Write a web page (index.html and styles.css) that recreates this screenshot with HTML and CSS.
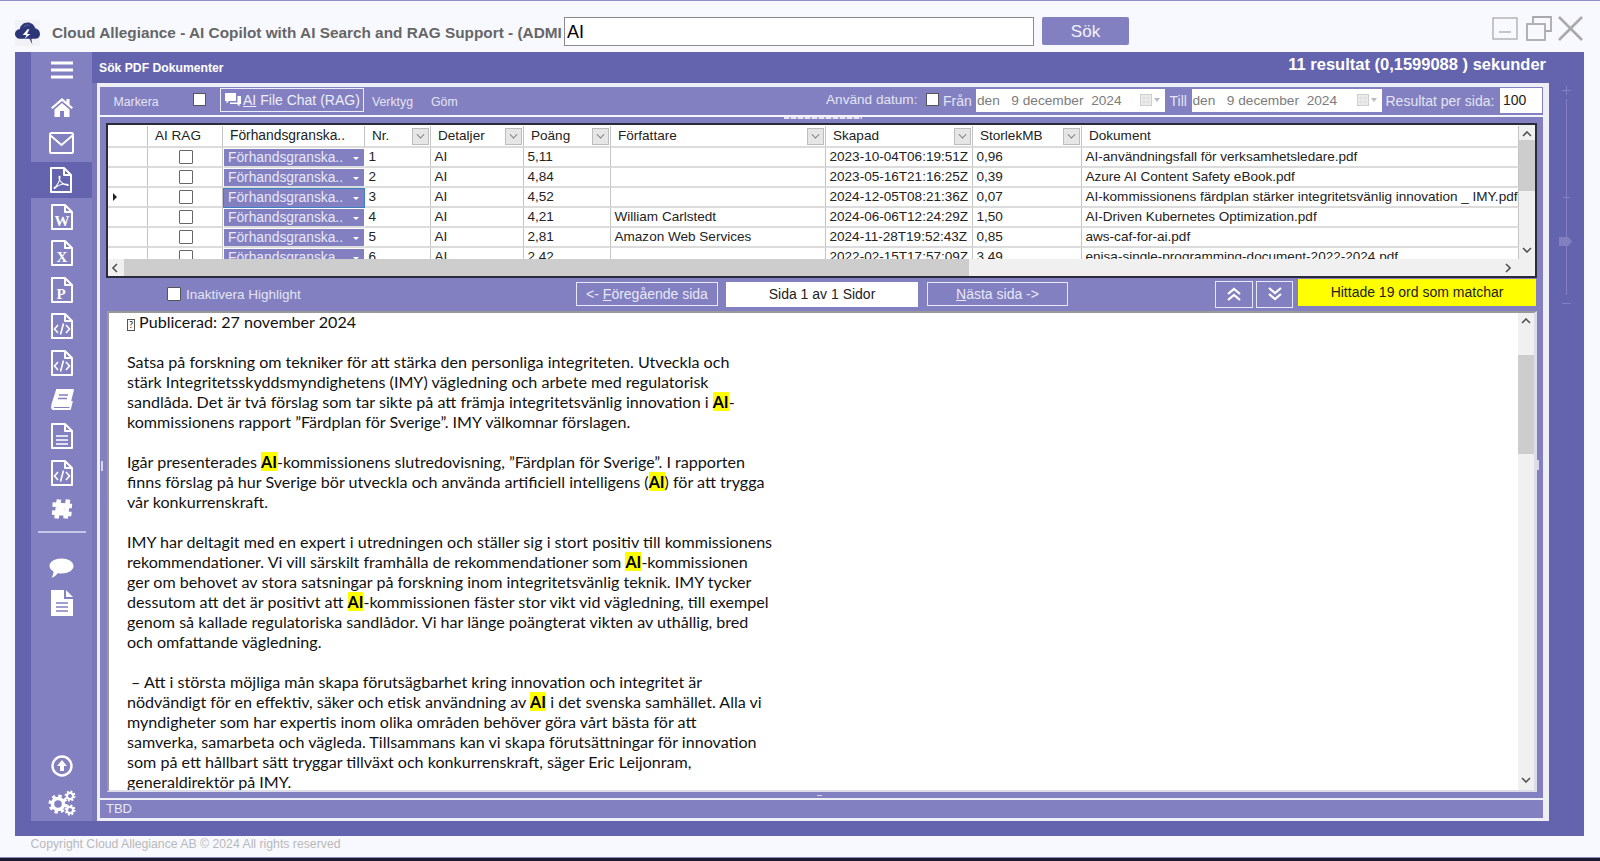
FILE: index.html
```html
<!DOCTYPE html>
<html lang="sv">
<head>
<meta charset="utf-8">
<title>Cloud Allegiance</title>
<link rel="stylesheet" href="styles.css">
</head>
<body>
<svg class="defs" width="0" height="0" aria-hidden="true">
  <symbol id="file" viewBox="0 0 22 26"><path d="M1 1H14L21 8V25H1Z M14 1V8H21" fill="none" stroke="#fff" stroke-width="2" stroke-linejoin="round"/></symbol>
  <symbol id="code" viewBox="0 0 22 26"><path d="M1 1H14L21 8V25H1Z M14 1V8H21" fill="none" stroke="#fff" stroke-width="2" stroke-linejoin="round"/><path d="M7 12L3.5 16L7 20M15 12L18.5 16L15 20M12.5 10.5L9.5 21.5" fill="none" stroke="#fff" stroke-width="1.6"/></symbol>
</svg>
<div class="app">
  <header class="topbar">
    <svg class="logo" viewBox="0 0 26 26"><path d="M6 19C2 19 0 16.500 0 14C0 11 2.500 9 5 9C5.500 5 9 2 13 2C17 2 20 4.500 21 8C24 8.500 26 11 26 14C26 17 24 19 21 19Z" fill="#2c3578"/><path d="M13 9L8 15H12L10 19L16 14H12.500L15 9Z" fill="#fff"/><path d="M14 17L18 25L17 19L19 18Z" fill="#3a3a80"/><path d="M9 7a5 5 0 0 1 6-2" fill="none" stroke="#5a64b0" stroke-width="1"/></svg>
    <h1 class="apptitle">Cloud Allegiance - AI Copilot with AI Search and RAG Support - (ADMI</h1>
    <input class="search" type="text" value="AI">
    <button class="searchbtn">Sök</button>
    <div class="winctl">
      <svg class="win w-min" viewBox="0 0 26 23"><rect x="1" y="1" width="24" height="21" fill="none" stroke="#b5b5b5" stroke-width="1.500"/><path d="M7 15H19" stroke="#b5b5b5" stroke-width="1.500"/></svg>
      <svg class="win w-max" viewBox="0 0 26 25"><path d="M7 7V1H25V15H19" fill="none" stroke="#aaa" stroke-width="1.800"/><rect x="1" y="8" width="18" height="16" fill="none" stroke="#aaa" stroke-width="1.800"/></svg>
      <svg class="win w-close" viewBox="0 0 25 25"><path d="M1 1L24 24M24 1L1 24" stroke="#aaa" stroke-width="2.600"/></svg>
    </div>
  </header>

  <main class="shell">
    <nav class="sidebar">
      <a class="navitem"><svg class="ic-menu" viewBox="0 0 22 18"><path d="M0 2H22M0 9H22M0 16H22" stroke="#fff" stroke-width="3"/></svg></a>
      <a class="navitem"><svg class="ic-home" viewBox="0 0 24 20"><path d="M12 1L1 10.500L2.500 12L12 4L21.500 12L23 10.500L19.500 7.500V2H16.500V5Z" fill="#fff"/><path d="M4.500 12.500L12 6L19.500 12.500V20H14V14H10V20H4.500Z" fill="#fff"/></svg></a>
      <a class="navitem"><svg class="ic-mail" viewBox="0 0 25 22"><rect x="1" y="1" width="23" height="20" rx="1.500" fill="none" stroke="#fff" stroke-width="2"/><path d="M1.500 3.500L12.500 13L23.500 3.500" fill="none" stroke="#fff" stroke-width="2"/></svg></a>
      <a class="navitem active"><svg class="ic-file" viewBox="0 0 22 26"><use href="#file"/><path d="M4 21C7 19 10 14 10 10C10 9 9 9 9 10.500C9 14 13 18 18 18.500C19 18 17.500 17 15 17C11 17 7 19 4.500 21.500Z" fill="none" stroke="#fff" stroke-width="1.100"/></svg></a>
      <a class="navitem"><svg class="ic-file" viewBox="0 0 22 26"><use href="#file"/><text class="fl" x="11" y="22" text-anchor="middle">W</text></svg></a>
      <a class="navitem"><svg class="ic-file" viewBox="0 0 22 26"><use href="#file"/><text class="fl" x="11" y="22" text-anchor="middle">X</text></svg></a>
      <a class="navitem"><svg class="ic-file" viewBox="0 0 22 26"><use href="#file"/><text class="fl" x="10" y="22" text-anchor="middle">P</text></svg></a>
      <a class="navitem"><svg class="ic-file" viewBox="0 0 22 26"><use href="#code"/></svg></a>
      <a class="navitem"><svg class="ic-file" viewBox="0 0 22 26"><use href="#code"/></svg></a>
      <a class="navitem"><svg class="ic-book" viewBox="0 0 24 22"><path d="M6 1H23L19 17H4C2 17 1.500 20 4 20H20L22 12" fill="none" stroke="#fff" stroke-width="1.800" stroke-linejoin="round"/><path d="M6 1L1.500 15C1 18 1 20 3 21H4L4 17L6 17L19 17L23 1Z" fill="#fff"/><path d="M9 6H18M8 9.500H17" stroke="#8280c0" stroke-width="1.500"/></svg></a>
      <a class="navitem"><svg class="ic-file" viewBox="0 0 22 26"><use href="#file"/><path d="M5 13H17M5 17H17M5 21H17" stroke="#fff" stroke-width="1.700"/></svg></a>
      <a class="navitem"><svg class="ic-file" viewBox="0 0 22 26"><use href="#code"/></svg></a>
      <a class="navitem"><svg class="ic-puzzle" viewBox="0 0 24 24"><path d="M9 2.500L6.500 21.500M18 2.500L15.500 21.500M2.500 7.500L22 9M2 15.500L21.500 17" fill="none" stroke="#fff" stroke-width="4.600"/><path d="M10 10H15L14 15.500H9Z" fill="#fff"/></svg></a>
      <hr class="navsep">
      <a class="navitem short"><svg class="ic-chat" viewBox="0 0 25 21"><path d="M12.500 1C19 1 24.500 4 24.500 8.500C24.500 13 19 16 12.500 16C11 16 10 16 9 15.500C7 18 4.500 20 2.500 20C4 18 4.500 16 4.500 14C2 12.500 0.500 10.500 0.500 8.500C0.500 4 6 1 12.500 1Z" fill="#fff"/></svg></a>
      <a class="navitem short"><svg class="ic-file" viewBox="0 0 22 26"><path d="M0 0H13V9H22V26H0Z M15 0L22 7H15Z" fill="#fff"/><path d="M5 13H17M5 17H17M5 21H17" stroke="#8280c0" stroke-width="1.700"/></svg></a>
      <a class="navitem bottomfirst"><svg class="ic-up" viewBox="0 0 22 22"><circle cx="11" cy="11" r="9.500" fill="none" stroke="#fff" stroke-width="2.400"/><path d="M11 5L16 11H13V16H9V11H6Z" fill="#fff"/></svg></a>
      <a class="navitem"><svg class="ic-gears" viewBox="0 0 28 26"><circle cx="10" cy="14" r="5.500" fill="none" stroke="#fff" stroke-width="3.500"/><circle cx="10" cy="14" r="8" fill="none" stroke="#fff" stroke-width="3" stroke-dasharray="3.300 3"/><circle cx="22" cy="6" r="3" fill="none" stroke="#fff" stroke-width="2"/><circle cx="22" cy="6" r="4.500" fill="none" stroke="#fff" stroke-width="2" stroke-dasharray="2 1.500"/><circle cx="22" cy="20" r="3" fill="none" stroke="#fff" stroke-width="2"/><circle cx="22" cy="20" r="4.500" fill="none" stroke="#fff" stroke-width="2" stroke-dasharray="2 1.500"/></svg></a>
    </nav>

    <section class="content">
      <div class="headband">
        <span class="pagetitle">Sök PDF Dokumenter</span>
        <span class="resultinfo">11 resultat (0,1599088 ) sekunder</span>
      </div>
      <div class="panel">
        <div class="purple">
          <i class="grip grip-left"></i>
          <i class="grip grip-right"></i>
          <i class="grip grip-top"></i>
          <i class="grip grip-bottom"></i>
          <div class="toolbar">
            <span class="tool t-markera">Markera</span>
            <span class="cb t-cb"></span>
            <button class="chatbtn"><svg class="chatic" viewBox="0 0 16 14"><path d="M0 0H11V8H4L1.500 10.500V8H0Z" fill="#fff"/><path d="M12.500 3H16V11H14.500V13.500L12 11H5V9.500H12.500Z" fill="#fff"/></svg><u>AI</u> File Chat (RAG)</button>
            <span class="tool t-verktyg">Verktyg</span>
            <span class="tool t-gom">Göm</span>
            <span class="tool t-datum">Använd datum:</span>
            <span class="cb t-cb2"></span>
            <span class="tool t-fran">Från</span>
            <div class="date t-d1"><span>den&nbsp;&nbsp; 9 december&nbsp; 2024</span><svg class="cal" viewBox="0 0 20 12"><rect x="0.500" y="0.500" width="11" height="11" fill="#eee" stroke="#ccc"/><path d="M0 4H12M0 8H12M4 0V12M8 0V12" stroke="#ddd"/><path d="M14 4H20L17 8Z" fill="#bbb"/></svg></div>
            <span class="tool t-till">Till</span>
            <div class="date t-d2"><span>den&nbsp;&nbsp; 9 december&nbsp; 2024</span><svg class="cal" viewBox="0 0 20 12"><rect x="0.500" y="0.500" width="11" height="11" fill="#eee" stroke="#ccc"/><path d="M0 4H12M0 8H12M4 0V12M8 0V12" stroke="#ddd"/><path d="M14 4H20L17 8Z" fill="#bbb"/></svg></div>
            <span class="tool t-res">Resultat per sida:</span>
            <input class="perpage" type="text" value="100">
          </div>

          <div class="gridbox">
            <div class="gridmain">
              <div class="table">
                <div class="cell hd"></div>
                <div class="cell hd"><span>AI RAG</span></div>
                <div class="cell hd hd-prev"><span>Förhandsgranska..</span></div>
                <div class="cell hd"><span>Nr.</span><i class="filter"></i></div>
                <div class="cell hd"><span>Detaljer</span><i class="filter"></i></div>
                <div class="cell hd"><span>Poäng</span><i class="filter"></i></div>
                <div class="cell hd"><span>Författare</span><i class="filter"></i></div>
                <div class="cell hd"><span>Skapad</span><i class="filter"></i></div>
                <div class="cell hd"><span>StorlekMB</span><i class="filter"></i></div>
                <div class="cell hd"><span>Dokument</span></div>

                <div class="cell"></div><div class="cell ctr"><span class="cb gridcb"></span></div><div class="cell drop"><span>Förhandsgranska..</span></div><div class="cell">1</div><div class="cell">AI</div><div class="cell">5,11</div><div class="cell"></div><div class="cell">2023-10-04T06:19:51Z</div><div class="cell">0,96</div><div class="cell">AI-användningsfall för verksamhetsledare.pdf</div>
                <div class="cell"></div><div class="cell ctr"><span class="cb gridcb"></span></div><div class="cell drop"><span>Förhandsgranska..</span></div><div class="cell">2</div><div class="cell">AI</div><div class="cell">4,84</div><div class="cell"></div><div class="cell">2023-05-16T21:16:25Z</div><div class="cell">0,39</div><div class="cell">Azure AI Content Safety eBook.pdf</div>
                <div class="cell cur"><i class="rowarrow"></i></div><div class="cell ctr"><span class="cb gridcb"></span></div><div class="cell drop sel"><span>Förhandsgranska..</span></div><div class="cell">3</div><div class="cell">AI</div><div class="cell">4,52</div><div class="cell"></div><div class="cell">2024-12-05T08:21:36Z</div><div class="cell">0,07</div><div class="cell">AI-kommissionens färdplan stärker integritetsvänlig innovation _ IMY.pdf</div>
                <div class="cell"></div><div class="cell ctr"><span class="cb gridcb"></span></div><div class="cell drop"><span>Förhandsgranska..</span></div><div class="cell">4</div><div class="cell">AI</div><div class="cell">4,21</div><div class="cell">William Carlstedt</div><div class="cell">2024-06-06T12:24:29Z</div><div class="cell">1,50</div><div class="cell">AI-Driven Kubernetes Optimization.pdf</div>
                <div class="cell"></div><div class="cell ctr"><span class="cb gridcb"></span></div><div class="cell drop"><span>Förhandsgranska..</span></div><div class="cell">5</div><div class="cell">AI</div><div class="cell">2,81</div><div class="cell">Amazon Web Services</div><div class="cell">2024-11-28T19:52:43Z</div><div class="cell">0,85</div><div class="cell">aws-caf-for-ai.pdf</div>
                <div class="cell"></div><div class="cell ctr"><span class="cb gridcb"></span></div><div class="cell drop"><span>Förhandsgranska..</span></div><div class="cell">6</div><div class="cell">AI</div><div class="cell">2,42</div><div class="cell"></div><div class="cell">2022-02-15T17:57:09Z</div><div class="cell">3,49</div><div class="cell">enisa-single-programming-document-2022-2024.pdf</div>
              </div>
              <div class="vscroll gridv">
                <svg class="arr" viewBox="0 0 10 6"><path d="M1 5L5 1L9 5" fill="none" stroke="#555" stroke-width="1.600"/></svg>
                <div class="vthumb gridthumb"></div>
                <svg class="arr arr-end" viewBox="0 0 10 6"><path d="M1 1L5 5L9 1" fill="none" stroke="#555" stroke-width="1.600"/></svg>
              </div>
            </div>
            <div class="hscroll">
              <svg class="harr" viewBox="0 0 6 10"><path d="M5 1L1 5L5 9" fill="none" stroke="#555" stroke-width="1.600"/></svg>
              <div class="hthumb"></div>
              <svg class="harr" viewBox="0 0 6 10"><path d="M1 1L5 5L1 9" fill="none" stroke="#555" stroke-width="1.600"/></svg>
            </div>
          </div>

          <div class="navrow">
            <span class="cb n-cb"></span>
            <span class="tool n-label">Inaktivera Highlight</span>
            <button class="pagebtn n-prev">&lt;- <u>F</u>öregående sida</button>
            <div class="pageinfo">Sida 1 av 1 Sidor</div>
            <button class="pagebtn n-next"><u>N</u>ästa sida -&gt;</button>
            <button class="jump n-up"><svg viewBox="0 0 16 14"><path d="M2 7L8 2L14 7M2 13L8 8L14 13" fill="none" stroke="#fff" stroke-width="2.200"/></svg></button>
            <button class="jump n-down"><svg viewBox="0 0 16 14"><path d="M2 1L8 6L14 1M2 7L8 12L14 7" fill="none" stroke="#fff" stroke-width="2.200"/></svg></button>
            <div class="matches">Hittade 19 ord som matchar</div>
          </div>

          <div class="viewer">
            <div class="doc">
<span class="missing">?</span> Publicerad: 27 november 2024<br>
<br>
Satsa på forskning om tekniker för att stärka den personliga integriteten. Utveckla och<br>
stärk Integritetsskyddsmyndighetens (IMY) vägledning och arbete med regulatorisk<br>
sandlåda. Det är två förslag som tar sikte på att främja integritetsvänlig innovation i <mark>AI</mark>-<br>
kommissionens rapport ”Färdplan för Sverige”. IMY välkomnar förslagen.<br>
<br>
Igår presenterades <mark>AI</mark>-kommissionens slutredovisning, ”Färdplan för Sverige”. I rapporten<br>
finns förslag på hur Sverige bör utveckla och använda artificiell intelligens (<mark>AI</mark>) för att trygga<br>
vår konkurrenskraft.<br>
<br>
IMY har deltagit med en expert i utredningen och ställer sig i stort positiv till kommissionens<br>
rekommendationer. Vi vill särskilt framhålla de rekommendationer som <mark>AI</mark>-kommissionen<br>
ger om behovet av stora satsningar på forskning inom integritetsvänlig teknik. IMY tycker<br>
dessutom att det är positivt att <mark>AI</mark>-kommissionen fäster stor vikt vid vägledning, till exempel<br>
genom så kallade regulatoriska sandlådor. Vi har länge poängterat vikten av uthållig, bred<br>
och omfattande vägledning.<br>
<br>
&nbsp;– Att i största möjliga mån skapa förutsägbarhet kring innovation och integritet är<br>
nödvändigt för en effektiv, säker och etisk användning av <mark>AI</mark> i det svenska samhället. Alla vi<br>
myndigheter som har expertis inom olika områden behöver göra vårt bästa för att<br>
samverka, samarbeta och vägleda. Tillsammans kan vi skapa förutsättningar för innovation<br>
som på ett hållbart sätt tryggar tillväxt och konkurrenskraft, säger Eric Leijonram,<br>
generaldirektör på IMY.
            </div>
            <div class="vscroll docv">
              <svg class="arr" viewBox="0 0 10 6"><path d="M1 5L5 1L9 5" fill="none" stroke="#555" stroke-width="1.600"/></svg>
              <div class="vthumb docthumb"></div>
              <svg class="arr arr-end" viewBox="0 0 10 6"><path d="M1 1L5 5L9 1" fill="none" stroke="#555" stroke-width="1.600"/></svg>
            </div>
          </div>
        </div>
        <div class="status">TBD</div>
      </div>
    </section>

    <aside class="zoomer">
      <span class="zplus"></span>
      <div class="ztrack"><i class="ztick"></i><i class="zthumb"></i></div>
      <span class="zminus"></span>
    </aside>
  </main>

  <footer class="copy">Copyright Cloud Allegiance AB © 2024 All rights reserved</footer>
  <div class="taskedge"></div>
</div>
</body>
</html>
```

FILE: styles.css
```css
* { box-sizing: border-box; }
html, body { margin: 0; height: 100%; overflow: hidden; }
body { font-family: "Liberation Sans", Arial, sans-serif; background: #f8f9ff; color: #111; }
.defs { position: absolute; }
button { font-family: inherit; cursor: pointer; }

.app { height: 861px; display: flex; flex-direction: column; border-top: 1px solid #9090cc; }

/* Top bar */
.topbar { height: 51px; flex: none; display: flex; align-items: flex-start; padding: 16px 17px 0 15px; }
.logo { width: 25px; height: 26px; flex: none; margin-top: 3px; background: #f2f2f6; }
.apptitle { margin: 7px 0 0 12px; width: 512px; flex: none; overflow: hidden; white-space: nowrap; font-size: 15.350px; line-height: 17px; font-weight: 700; color: #666; }
.search { width: 470px; height: 29px; flex: none; border: 1px solid #8a8a8a; padding: 2px 2px 0; font: 18px "Liberation Sans", Arial, sans-serif; color: #000; background: #fff; outline: none; }
.searchbtn { width: 87px; height: 28px; flex: none; margin-left: 8px; border: 0; border-radius: 2px; background: #8280c0; color: #f2f2ff; font-size: 17px; padding: 2px 0 0; }
.winctl { display: flex; margin-left: auto; align-items: flex-start; }
.win { display: block; flex: none; }
.w-min { width: 26px; height: 23px; }
.w-max { width: 26px; height: 25px; margin-left: 8px; margin-top: -1px; }
.w-close { width: 25px; height: 25px; margin-left: 6px; margin-top: -1px; }

/* Shell */
.shell { height: 784px; flex: none; width: 1569px; margin-left: 15px; display: flex; padding: 0 0 15px 16px; background: #6464ae; }
.sidebar { width: 61px; flex: none; background: #8280c0; display: flex; flex-direction: column; margin-right: 5px; }
.navitem { height: 36.6px; flex: none; display: flex; align-items: center; justify-content: center; }
.navitem.short { height: 35px; }
.navitem.active { background: #6464ae; margin-left: -1px; }
.bottomfirst { margin-top: auto; }
.navsep { width: 48px; height: 2px; border: 0; background: #c6c6e6; margin: 3px auto 17.500px; flex: none; }
.ic-menu { width: 22px; height: 18px; }
.ic-home { width: 24px; height: 20px; }
.ic-mail { width: 25px; height: 22px; }
.ic-file { width: 22px; height: 26px; overflow: visible; }
.ic-book { width: 24px; height: 22px; }
.ic-puzzle { width: 24px; height: 24px; }
.ic-chat { width: 25px; height: 22px; }
.ic-up { width: 22px; height: 22px; }
.ic-gears { width: 28px; height: 26px; }
.fl { font: 700 15px "Liberation Serif", serif; fill: #fff; }

.content { width: 1452px; flex: none; display: flex; flex-direction: column; }
.headband { height: 31px; flex: none; display: flex; justify-content: space-between; padding: 3px 3px 0 2px; color: #fff; font-weight: 700; }
.pagetitle { font-size: 12.200px; line-height: 27px; }
.resultinfo { font-size: 16.500px; line-height: 19px; }

.panel { flex: 1; min-height: 0; background: #eeeef6; padding: 4px 6px 3px 3px; display: flex; flex-direction: column; box-shadow: -5px 0 0 #7a78b8; }
.purple { height: 711px; flex: none; background: #8280c0; padding: 0 6px; display: flex; flex-direction: column; position: relative; }
.status { height: 18px; flex: none; margin-top: 2px; background: #8280c0; color: #e8e8f6; font-size: 13px; line-height: 18px; padding-left: 6px; }

/* Splitter grips */
.grip { position: absolute; background: #d8d8ee; }
.grip-left { left: 1px; top: 374px; width: 2px; height: 10px; }
.grip-right { right: 4px; top: 373px; width: 2px; height: 10px; }
.grip-top { left: 684px; top: 30px; width: 78px; height: 2px; background: repeating-linear-gradient(90deg, #e4e4f6 0 5px, #a8a6d6 5px 7px); }
.grip-bottom { left: 717px; top: 708px; width: 5px; height: 1px; }

/* Toolbar */
.toolbar { height: 30px; flex: none; margin: 0 -6px; border-bottom: 2px solid #f4f4fb; display: flex; align-items: center; color: #e4e4f4; font-size: 12.300px; padding-bottom: 1px; }
.tool { white-space: nowrap; flex: none; }
.cb { display: block; flex: none; width: 13px; height: 13px; background: #fff; border: 1px solid #555; }
.t-markera { margin-left: 13.500px; width: 79.500px; margin-top: 2px; }
.t-cb { margin-right: 14px; margin-top: -2px; }
.chatbtn { width: 144px; height: 24px; flex: none; padding: 0 0 0 4px; margin-top: -2px; background: transparent; border: 1px solid #eeeefa; color: #eeeefa; font-size: 14px; display: flex; align-items: center; white-space: nowrap; }
.chatbtn u { margin-right: 4px; }
.chatic { width: 16px; height: 14px; flex: none; margin-right: 2px; }
.t-verktyg { margin-left: 8px; width: 59px; margin-top: 2px; }
.t-gom { width: 395px; margin-top: 2px; }
.t-datum { font-size: 13.600px; width: 99.500px; margin-top: -2px; }
.t-cb2 { margin-top: -3px; }
.t-fran { font-size: 14px; margin-left: 4.500px; width: 33px; }
.date { flex: none; height: 23px; background: #fff; color: #7c7c7c; font-size: 13.700px; display: flex; align-items: center; justify-content: space-between; padding: 0 5px 0 1px; white-space: pre; margin-top: -1px; }
.t-d1 { width: 189px; }
.t-d2 { width: 190px; }
.cal { width: 20px; height: 12px; flex: none; }
.t-till { font-size: 14px; width: 26.500px; padding-left: 4.500px; }
.t-res { font-size: 14px; margin-left: 4px; width: 114.500px; }
.perpage { width: 41.500px; height: 25px; flex: none; border: 0; background: #fff; font: 14px "Liberation Sans", Arial, sans-serif; color: #222; padding: 0 3px; outline: none; margin-top: -1px; }

/* Grid */
.gridbox { height: 155px; flex: none; margin-top: 6px; border: 2px solid #2a2a3a; background: #fff; display: flex; flex-direction: column; }
.gridmain { height: 134px; flex: none; display: flex; }
.table { width: 1411px; flex: none; display: grid; grid-template-columns: 40px 75px 142px 66px 93px 87px 215px 147px 109px 437px; grid-template-rows: 22px repeat(6, 20px); overflow: hidden; height: 134px; padding-top: 1px; font-size: 13.550px; color: #222; }
.cell { border-right: 1px solid #c4c4c4; border-bottom: 2px solid #dcdcdc; padding: 0 0 0 3.500px; display: flex; align-items: center; white-space: nowrap; overflow: hidden; line-height: 18px; }
.hd { padding-left: 7px; justify-content: space-between; color: #222; }
.hd-prev { font-size: 13.800px; }
.filter { width: 17px; height: 17px; flex: none; margin-right: 1px; background: #e6e6e6; border: 1px solid #bdbdbd; position: relative; }
.filter::after { content: ""; position: absolute; left: 4px; top: 2px; width: 6px; height: 6px; border-right: 1px solid #666; border-bottom: 1px solid #666; transform: rotate(45deg) scale(.8); }
.ctr { justify-content: center; padding: 0; }
.gridcb { width: 14px; height: 14px; border: 1px solid #666; border-radius: 1px; margin-left: 2px; }
.drop { background: #8280c0; color: #e8e8f8; padding-left: 4px; font-size: 13.800px; border: 1px solid #fff; border-bottom: 2px solid #dcdcdc; position: relative; }
.drop::after { content: ""; position: absolute; right: 5px; top: 8px; border-left: 3px solid transparent; border-right: 3px solid transparent; border-top: 3px solid #fff; }
.sel { border: 1px solid #3b7fc4; }
.rowarrow { display: block; border-left: 4px solid #222; border-top: 4px solid transparent; border-bottom: 4px solid transparent; margin-left: 1px; }

.vscroll { display: flex; flex-direction: column; align-items: center; background: #f0f0f0; }
.arr { width: 10px; height: 6px; flex: none; }
.arr-end { margin-top: auto; }
.vthumb { background: #cdcdcd; flex: none; align-self: stretch; }
.gridv { width: 16px; flex: none; padding: 6px 0; }
.gridthumb { height: 51px; margin-top: 3px; }
.docv { width: 16px; flex: none; padding: 5px 0 7px; }
.docthumb { height: 99px; margin-top: 31px; }
.hscroll { height: 17px; flex: none; display: flex; align-items: center; background: #f0f0f0; padding: 0 24px 0 4px; }
.harr { width: 6px; height: 10px; flex: none; }
.hthumb { width: 845px; height: 17px; background: #cdcdcd; margin: 0 auto 0 6px; }

/* Nav row */
.navrow { height: 34px; flex: none; padding-bottom: 2px; display: flex; align-items: center; color: #e4e4f4; font-size: 13.500px; }
.n-cb { margin-left: 61px; width: 14px; height: 14px; border-radius: 1px; }
.n-label { margin-left: 5px; width: 390px; }
.pagebtn { height: 24px; flex: none; background: transparent; border: 1px solid #e8e8f8; color: #e8e8f8; font-size: 14px; padding: 0; }
.n-prev { width: 142px; }
.pageinfo { width: 192px; height: 25px; flex: none; margin: 0 9px 0 8px; background: #fff; color: #222; text-align: center; font-size: 14px; line-height: 25px; }
.n-next { width: 141px; }
.jump { width: 38px; height: 27px; flex: none; background: transparent; border: 1px solid #e8e8f8; padding: 0; display: flex; align-items: center; justify-content: center; }
.jump svg { width: 16px; height: 14px; }
.n-up { margin-left: 147px; }
.n-down { margin-left: 3px; width: 37px; }
.matches { width: 238px; height: 27px; flex: none; margin-left: 5px; background: #ffff00; color: #222; text-align: center; font-size: 14px; line-height: 26px; margin-top: -3px; }

/* Viewer */
.viewer { height: 481px; flex: none; margin-left: 1px; margin-top: -1px; background: #fff; border-top: 2px solid #999; border-left: 2px solid #999; border-right: 3px solid #ddddea; border-bottom: 2px solid #ddddea; display: flex; overflow: hidden; }
.doc { flex: 1; min-width: 0; margin-top: -1px; padding-left: 18px; white-space: nowrap; font-family: Lato, "Liberation Sans", sans-serif; font-size: 16.080px; line-height: 20px; color: #111; overflow: hidden; }
.doc mark { background: #ffff00; color: #000; font-weight: 700; }
.missing { display: inline-block; width: 8px; height: 12px; border: 1px solid #555; font-size: 9px; line-height: 10px; text-align: center; margin-right: 0; }

/* Zoom slider */
.zoomer { width: 35px; flex: none; display: flex; flex-direction: column; align-items: center; padding-top: 34px; }
.zplus { width: 9px; height: 9px; flex: none; background: linear-gradient(#8280c0, #8280c0) center/9px 1px no-repeat, linear-gradient(#8280c0, #8280c0) center/1px 9px no-repeat; }
.ztrack { width: 1px; height: 196px; flex: none; margin-top: 4px; background: #8280c0; position: relative; }
.ztick { position: absolute; left: -3px; top: 98px; width: 7px; height: 1px; background: #8280c0; }
.zthumb { position: absolute; left: -7px; top: 138px; width: 13px; height: 9px; background: #8280c0; clip-path: polygon(0 0, 70% 0, 100% 50%, 70% 100%, 0 100%); }
.zminus { width: 9px; height: 1px; flex: none; margin-top: 8px; background: #8280c0; }

.copy { height: 21px; flex: none; padding-left: 30.500px; color: #b8b8b8; font-size: 12.250px; line-height: 16px; }
.taskedge { flex: 1; background: #1e1a2e; border-top: 1px solid #8e8cc0; }
```
